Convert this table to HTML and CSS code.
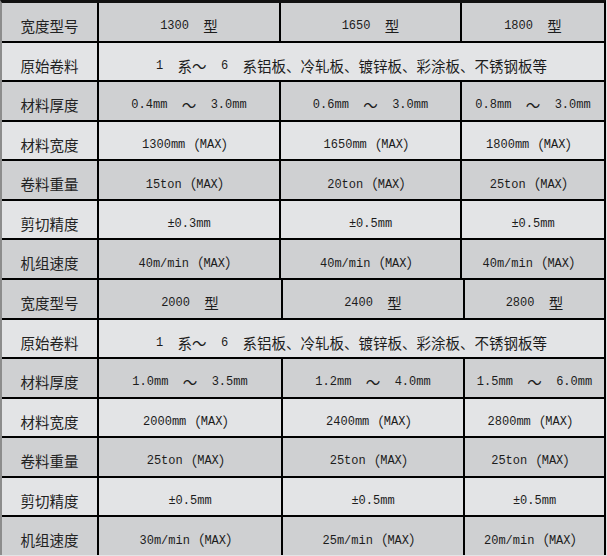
FILE: index.html
```html
<!DOCTYPE html>
<html lang="zh-CN">
<head>
<meta charset="utf-8">
<title>规格参数</title>
<link rel="stylesheet" href="styles.css">
</head>
<body>
<div class="spec">
  <div class="section s1">
    <div class="c lab dark">宽度型号</div>
    <div class="c dark">1300  <span class="zh">型</span></div>
    <div class="c dark">1650  <span class="zh">型</span></div>
    <div class="c dark">1800  <span class="zh">型</span></div>

    <div class="c lab light">原始卷料</div>
    <div class="c light span3">1  <span class="zh">系～</span>  6  <span class="zh">系铝板、冷轧板、镀锌板、彩涂板、不锈钢板等</span></div>

    <div class="c lab dark">材料厚度</div>
    <div class="c dark">0.4mm  <span class="zh">～</span>  3.0mm</div>
    <div class="c dark">0.6mm  <span class="zh">～</span>  3.0mm</div>
    <div class="c dark">0.8mm  <span class="zh">～</span>  3.0mm</div>

    <div class="c lab light">材料宽度</div>
    <div class="c light">1300mm<span class="zh">（</span>MAX<span class="zh">）</span></div>
    <div class="c light">1650mm<span class="zh">（</span>MAX<span class="zh">）</span></div>
    <div class="c light">1800mm<span class="zh">（</span>MAX<span class="zh">）</span></div>

    <div class="c lab dark">卷料重量</div>
    <div class="c dark">15ton<span class="zh">（</span>MAX<span class="zh">）</span></div>
    <div class="c dark">20ton<span class="zh">（</span>MAX<span class="zh">）</span></div>
    <div class="c dark">25ton<span class="zh">（</span>MAX<span class="zh">）</span></div>

    <div class="c lab light">剪切精度</div>
    <div class="c light">±0.3mm</div>
    <div class="c light">±0.5mm</div>
    <div class="c light">±0.5mm</div>

    <div class="c lab dark">机组速度</div>
    <div class="c dark">40m/min<span class="zh">（</span>MAX<span class="zh">）</span></div>
    <div class="c dark">40m/min<span class="zh">（</span>MAX<span class="zh">）</span></div>
    <div class="c dark">40m/min<span class="zh">（</span>MAX<span class="zh">）</span></div>
  </div>

  <div class="section s2">
    <div class="c lab dark">宽度型号</div>
    <div class="c dark">2000  <span class="zh">型</span></div>
    <div class="c dark">2400  <span class="zh">型</span></div>
    <div class="c dark">2800  <span class="zh">型</span></div>

    <div class="c lab light">原始卷料</div>
    <div class="c light span3">1  <span class="zh">系～</span>  6  <span class="zh">系铝板、冷轧板、镀锌板、彩涂板、不锈钢板等</span></div>

    <div class="c lab dark">材料厚度</div>
    <div class="c dark">1.0mm  <span class="zh">～</span>  3.5mm</div>
    <div class="c dark">1.2mm  <span class="zh">～</span>  4.0mm</div>
    <div class="c dark">1.5mm  <span class="zh">～</span>  6.0mm</div>

    <div class="c lab light">材料宽度</div>
    <div class="c light">2000mm<span class="zh">（</span>MAX<span class="zh">）</span></div>
    <div class="c light">2400mm<span class="zh">（</span>MAX<span class="zh">）</span></div>
    <div class="c light">2800mm<span class="zh">（</span>MAX<span class="zh">）</span></div>

    <div class="c lab dark">卷料重量</div>
    <div class="c dark">25ton<span class="zh">（</span>MAX<span class="zh">）</span></div>
    <div class="c dark">25ton<span class="zh">（</span>MAX<span class="zh">）</span></div>
    <div class="c dark">25ton<span class="zh">（</span>MAX<span class="zh">）</span></div>

    <div class="c lab light">剪切精度</div>
    <div class="c light">±0.5mm</div>
    <div class="c light">±0.5mm</div>
    <div class="c light">±0.5mm</div>

    <div class="c lab dark">机组速度</div>
    <div class="c dark">30m/min<span class="zh">（</span>MAX<span class="zh">）</span></div>
    <div class="c dark">25m/min<span class="zh">（</span>MAX<span class="zh">）</span></div>
    <div class="c dark">20m/min<span class="zh">（</span>MAX<span class="zh">）</span></div>
  </div>
</div>
</body>
</html>
```

FILE: styles.css
```css
html, body {
  margin: 0;
  padding: 0;
  background: #e3e4e6;
}

.spec {
  width: 602px;
  display: flex;
  flex-direction: column;
  gap: 2px;
  background: #000;
  border-top: 3px solid #111;
  border-left: 2px solid #8c8c8c;
  border-right: 2px solid #000;
}

.section {
  display: grid;
  grid-template-rows: repeat(7, 37.57px);
  gap: 2px;
}

.s1 {
  grid-template-columns: 95px 180px 179px 142px;
}

.s2 {
  grid-template-columns: 95px 182px 180px 139px;
}

.c {
  display: flex;
  align-items: center;
  justify-content: center;
  padding-top: 9px;
  box-sizing: border-box;
  font-family: "Liberation Mono", "Noto Sans CJK SC", monospace;
  font-size: 12px;
  line-height: 1;
  color: #1c1c1c;
  white-space: pre;
}

.dark {
  background: #cfd0d2;
}

.light {
  background: #e3e4e6;
}

.lab {
  font-family: "Noto Sans CJK SC", sans-serif;
  font-size: 14.5px;
  color: #222;
}

.zh {
  font-family: "Noto Sans CJK SC", sans-serif;
  font-size: 14.5px;
}

.span3 {
  grid-column: 2 / 5;
}
```
